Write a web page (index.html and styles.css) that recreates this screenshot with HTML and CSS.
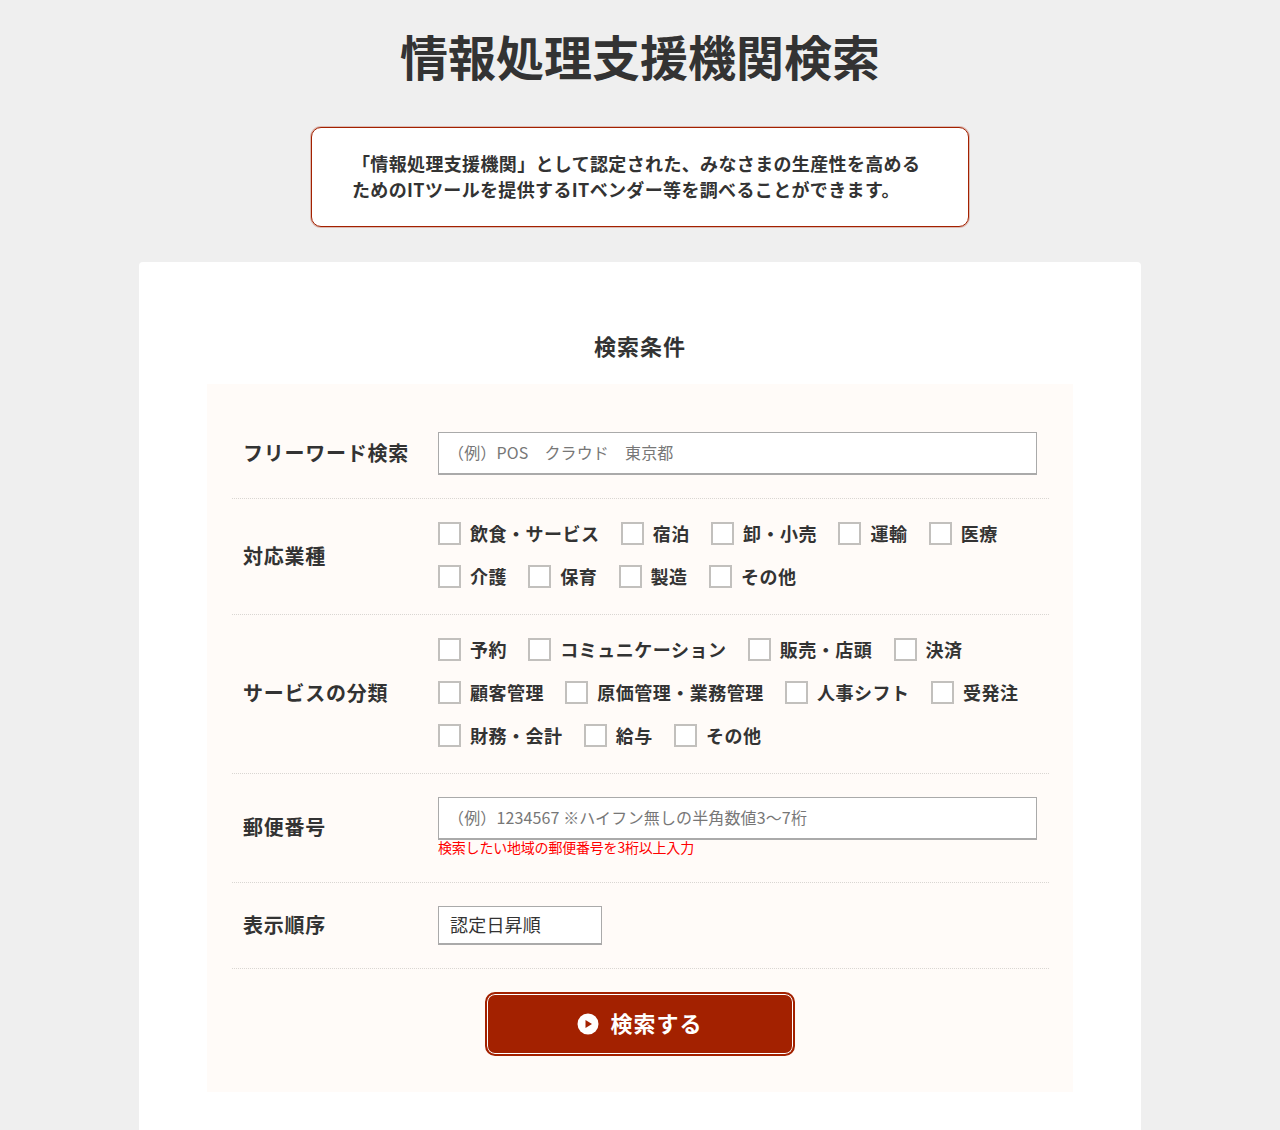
FILE: index.html
```html
<!DOCTYPE html>
<html lang="ja">
<head>
<meta charset="utf-8">
<title>情報処理支援機関検索</title>
<link rel="stylesheet" href="styles.css">
</head>
<body>
<h1 class="page-title">情報処理支援機関検索</h1>
<p class="intro">「情報処理支援機関」として認定された、みなさまの生産性を高める<br>ためのITツールを提供するITベンダー等を調べることができます。</p>
<main class="card">
  <h2 class="section-title">検索条件</h2>
  <form class="panel">
    <div class="row row-input">
      <div class="row-label">フリーワード検索</div>
      <div class="row-body"><input class="text-input" type="text" placeholder="（例）POS　クラウド　東京都"></div>
    </div>
    <div class="row row-check row-industry">
      <div class="row-label">対応業種</div>
      <div class="row-body checks">
        <label class="check"><input type="checkbox"><span>飲食・サービス</span></label>
        <label class="check"><input type="checkbox"><span>宿泊</span></label>
        <label class="check"><input type="checkbox"><span>卸・小売</span></label>
        <label class="check"><input type="checkbox"><span>運輸</span></label>
        <label class="check"><input type="checkbox"><span>医療</span></label>
        <label class="check"><input type="checkbox"><span>介護</span></label>
        <label class="check"><input type="checkbox"><span>保育</span></label>
        <label class="check"><input type="checkbox"><span>製造</span></label>
        <label class="check"><input type="checkbox"><span>その他</span></label>
      </div>
    </div>
    <div class="row row-check">
      <div class="row-label">サービスの分類</div>
      <div class="row-body checks">
        <label class="check"><input type="checkbox"><span>予約</span></label>
        <label class="check"><input type="checkbox"><span>コミュニケーション</span></label>
        <label class="check"><input type="checkbox"><span>販売・店頭</span></label>
        <label class="check"><input type="checkbox"><span>決済</span></label>
        <label class="check"><input type="checkbox"><span>顧客管理</span></label>
        <label class="check"><input type="checkbox"><span>原価管理・業務管理</span></label>
        <label class="check"><input type="checkbox"><span>人事シフト</span></label>
        <label class="check"><input type="checkbox"><span>受発注</span></label>
        <label class="check"><input type="checkbox"><span>財務・会計</span></label>
        <label class="check"><input type="checkbox"><span>給与</span></label>
        <label class="check"><input type="checkbox"><span>その他</span></label>
      </div>
    </div>
    <div class="row row-zip">
      <div class="row-label">郵便番号</div>
      <div class="row-body">
        <input class="text-input" type="text" placeholder="（例）1234567 ※ハイフン無しの半角数値3～7桁">
        <p class="note">検索したい地域の郵便番号を3桁以上入力</p>
      </div>
    </div>
    <div class="row row-sort">
      <div class="row-label">表示順序</div>
      <div class="row-body"><select class="sort"><option>認定日昇順</option></select></div>
    </div>
    <div class="actions">
      <button class="submit" type="button">
        <svg class="submit-icon" width="22" height="22" viewBox="0 0 22 22" aria-hidden="true"><circle cx="11" cy="11" r="10.5" fill="#fff"/><path d="M8.5 7 L15 11 L8.5 15 Z" fill="#a32100"/></svg>
        <span class="submit-text">検索する</span>
      </button>
    </div>
  </form>
</main>
</body>
</html>
```
FILE: styles.css
```css
* { box-sizing: border-box; }
html, body { margin: 0; padding: 0; }
body {
  background: #efefef;
  color: #333;
  font-family: "Noto Sans CJK JP", "Noto Sans", sans-serif;
  height: 1130px;
  overflow: hidden;
}
.page-title {
  margin: 0;
  padding-top: 20px;
  height: 127px;
  font-size: 48px;
  line-height: 70px;
  font-weight: 700;
  text-align: center;
}
.intro {
  width: 658px;
  height: 100px;
  margin: 0 auto 35px;
  padding: 23px 0 0 40px;
  background: #fff;
  border: 1px solid #a32100;
  border-radius: 10px;
  box-shadow: 0 0 0 1px rgba(163, 33, 0, 0.25);
  font-size: 18px;
  line-height: 25.5px;
  font-weight: 700;
  letter-spacing: 0.35px;
}
.card {
  width: 1002px;
  margin: 0 auto;
  padding: 65px 68px 0;
  height: 900px;
  background: #fff;
  border-radius: 4px;
}
.section-title {
  margin: 0 0 21px;
  font-size: 22px;
  line-height: 36px;
  font-weight: 700;
  letter-spacing: 1px;
  text-align: center;
}
.panel {
  display: block;
  height: 708px;
  padding: 24px 24px 0 25px;
  background: #fffbf8;
}
.row {
  display: flex;
  align-items: center;
  border-bottom: 1px dotted #d9d6d2;
}
.row-input { height: 91px; padding-top: 1px; }
.row-input .row-label { margin-bottom: 2px; }
.row-check { padding: 13px 0 16px; }
.row-industry .row-label { margin-top: 2px; }
.row-zip { height: 109px; align-items: flex-start; }
.row-sort { height: 86px; }
.row-sort .row-label { margin-bottom: 1px; }
.row-label {
  flex: none;
  width: 206px;
  padding-left: 11px;
  font-size: 20px;
  line-height: 30px;
  font-weight: 700;
  letter-spacing: 0.75px;
}
.row-zip .row-label { margin-top: 38px; }
.row-body { flex: none; width: 599px; }
.row-zip .row-body { padding-top: 23px; }
.text-input {
  display: block;
  width: 599px;
  height: 43px;
  padding: 0 9px 2px;
  background: #fff;
  border: 1px solid #aaa;
  border-bottom-width: 2px;
  border-radius: 0;
  font-family: inherit;
  font-size: 16px;
  letter-spacing: 0.13px;
  color: #333;
}
.text-input::placeholder { color: #777; opacity: 1; }
.note {
  margin: -1px 0 0;
  font-size: 14px;
  line-height: 16px;
  letter-spacing: -0.2px;
  color: #f00;
}
.checks {
  display: flex;
  flex-wrap: wrap;
  width: 625px;
  margin-right: -26px;
  column-gap: 21.3px;
}
.check {
  display: flex;
  align-items: center;
  gap: 9px;
  height: 43px;
  font-size: 18px;
  font-weight: 700;
  letter-spacing: 0.5px;
}
.check span { margin-bottom: 1px; }
.check input {
  appearance: none;
  flex: none;
  width: 23px;
  height: 23px;
  margin: 0;
  background: #fff;
  border: 2px solid #c2c0bd;
}
.sort {
  display: block;
  width: 164px;
  height: 39px;
  padding: 0 11px 3px;
  appearance: none;
  background: #fff;
  border: 1px solid #aaa;
  border-bottom-width: 2px;
  border-radius: 0;
  font-family: inherit;
  font-size: 18px;
  letter-spacing: 0.2px;
  color: #333;
}
.actions {
  display: flex;
  justify-content: center;
  padding: 23px 1px 0 0;
}
.submit {
  display: flex;
  align-items: center;
  justify-content: center;
  gap: 11px;
  width: 310px;
  height: 64px;
  padding: 0;
  background: #a32100;
  border: 2px solid #a32100;
  border-radius: 10px;
  box-shadow: inset 0 0 0 1px #fff;
  color: #fff;
  font-family: inherit;
  font-size: 22px;
  font-weight: 700;
  letter-spacing: 1px;
}
.submit-text { margin-bottom: 5px; }
.submit-icon { flex: none; }
```
